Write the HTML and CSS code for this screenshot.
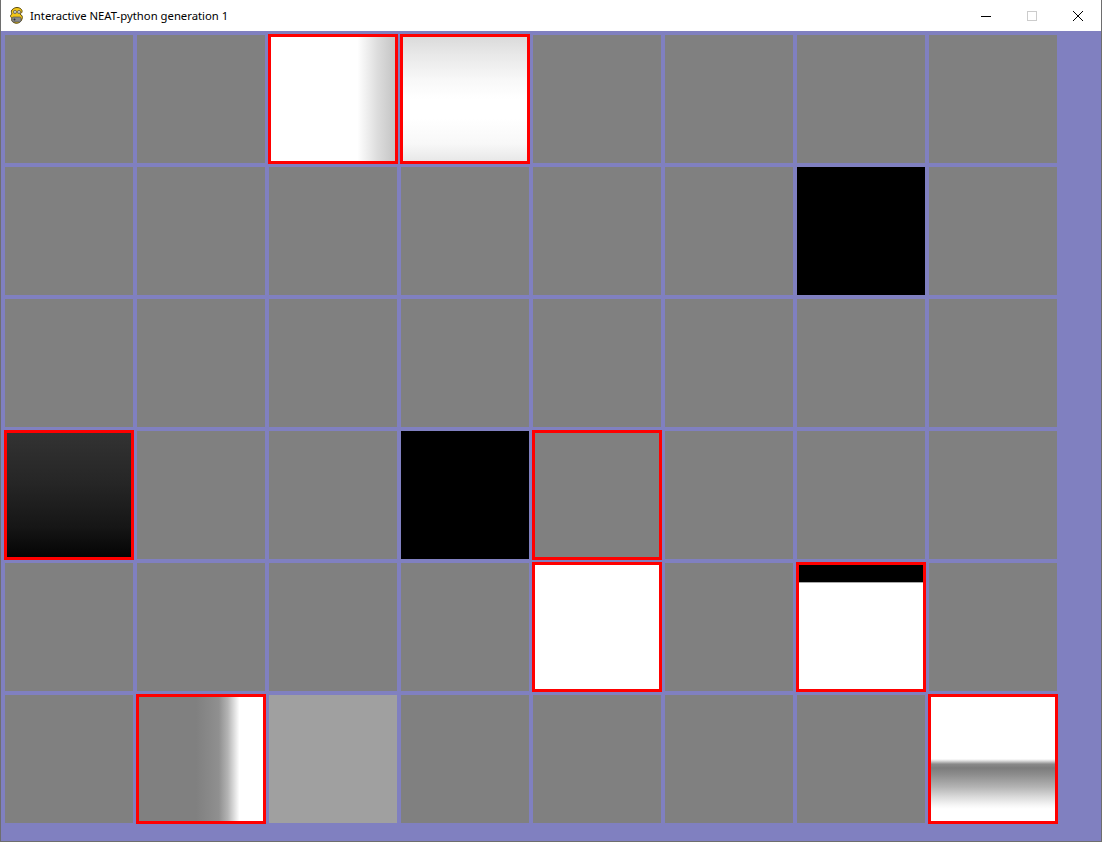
FILE: index.html
```html
<!DOCTYPE html>
<html>
<head>
<meta charset="utf-8">
<title>Interactive NEAT-python generation 1</title>
<link rel="stylesheet" href="styles.css">
</head>
<body>
<div class="window">
  <div class="titlebar">
    <svg class="app-icon" width="16" height="18" viewBox="0 0 16 18">
      <path d="M4 2 C6 0 10 0 12 2 C14 4 13 6 11 7 C13 8 14 10 13 12 C12 15 9 17 6 16 C3 15 2 13 3 11 C1 10 1 8 3 7 C2 5 2 3 4 2 Z" fill="#f2c618" stroke="#5a4a10" stroke-width="1"/>
      <circle cx="6" cy="5" r="1.6" fill="#fff" stroke="#333" stroke-width="0.6"/>
      <circle cx="10" cy="5" r="1.6" fill="#fff" stroke="#333" stroke-width="0.6"/>
      <circle cx="6" cy="5" r="0.6" fill="#000"/>
      <circle cx="10" cy="5" r="0.6" fill="#000"/>
      <rect x="3" y="10" width="9" height="5" rx="1.5" fill="#8a8a8a" stroke="#444" stroke-width="0.6"/>
      <circle cx="5.5" cy="12.5" r="1" fill="#333"/>
    </svg>
    <span class="title">Interactive NEAT-python generation 1</span>
    <div class="controls">
      <div class="ctl">
        <svg width="10" height="10" viewBox="0 0 10 10"><path d="M0 5.5 H10" stroke="#000" stroke-width="1"/></svg>
      </div>
      <div class="ctl">
        <svg width="10" height="10" viewBox="0 0 10 10"><rect x="0.5" y="0.5" width="9" height="9" fill="none" stroke="#cccccc" stroke-width="1"/></svg>
      </div>
      <div class="ctl">
        <svg width="10" height="10" viewBox="0 0 10 10"><path d="M0 0 L10 10 M10 0 L0 10" stroke="#000" stroke-width="1"/></svg>
      </div>
    </div>
  </div>
  <div class="canvas">
    <div class="grid">
      <div class="tile"></div><div class="tile"></div><div class="tile sel t-white-right"></div><div class="tile sel t-white-vert"></div><div class="tile"></div><div class="tile"></div><div class="tile"></div><div class="tile"></div>
      <div class="tile"></div><div class="tile"></div><div class="tile"></div><div class="tile"></div><div class="tile"></div><div class="tile"></div><div class="tile t-black"></div><div class="tile"></div>
      <div class="tile"></div><div class="tile"></div><div class="tile"></div><div class="tile"></div><div class="tile"></div><div class="tile"></div><div class="tile"></div><div class="tile"></div>
      <div class="tile sel t-dark"></div><div class="tile"></div><div class="tile"></div><div class="tile t-black"></div><div class="tile sel"></div><div class="tile"></div><div class="tile"></div><div class="tile"></div>
      <div class="tile"></div><div class="tile"></div><div class="tile"></div><div class="tile"></div><div class="tile sel t-white"></div><div class="tile"></div><div class="tile sel t-blackbar"></div><div class="tile"></div>
      <div class="tile"></div><div class="tile sel t-gray-right"></div><div class="tile t-light"></div><div class="tile"></div><div class="tile"></div><div class="tile"></div><div class="tile"></div><div class="tile sel t-band"></div>
    </div>
  </div>
</div>
</body>
</html>
```

FILE: styles.css
```css
html, body {
  margin: 0;
  padding: 0;
  background: #ffffff;
}

.window {
  width: 1102px;
  height: 842px;
  box-sizing: border-box;
  border-left: 1px solid #6e6e6e;
  border-right: 1px solid #6e6e6e;
  border-bottom: 1px solid #6e6e6e;
  display: flex;
  flex-direction: column;
  overflow: hidden;
}

.titlebar {
  height: 31px;
  flex: 0 0 31px;
  background: #ffffff;
  display: flex;
  align-items: center;
  font-family: "Noto Sans", "Open Sans", sans-serif;
  font-size: 11.3px;
  color: #000000;
}

.app-icon {
  margin-left: 8px;
  flex: 0 0 auto;
}

.title {
  margin-left: 5px;
  line-height: 16px;
  flex: 1 1 auto;
  white-space: nowrap;
}

.controls {
  display: flex;
  height: 100%;
}

.ctl {
  width: 46px;
  height: 31px;
  display: flex;
  align-items: center;
  justify-content: center;
}

.canvas {
  flex: 1 1 auto;
  background: #8080c0;
  padding: 4px;
}

.grid {
  display: grid;
  grid-template-columns: repeat(8, 128px);
  grid-auto-rows: 128px;
  gap: 4px;
}

.tile {
  background: #808080;
}

.sel {
  box-shadow: 0 0 0 1px #ff0000, inset 0 0 0 2px #ff0000;
}

.t-black {
  background: #000000;
}

.t-white {
  background: #ffffff;
}

.t-light {
  background: #a0a0a0;
}

.t-dark {
  background: linear-gradient(to bottom, #333333 0%, #262626 40%, #161616 75%, #030303 100%);
}

.t-white-right {
  background: linear-gradient(to right, #ffffff 0%, #ffffff 69%, #f2f2f2 75%, #dcdcdc 85%, #c2c2c2 100%);
}

.t-white-vert {
  background: linear-gradient(to bottom, #d9d9d9 0%, #e8e8e8 15%, #f8f8f8 35%, #ffffff 50%, #ffffff 65%, #f8f8f8 85%, #e6e6e6 100%);
}

.t-blackbar {
  background: linear-gradient(to bottom, #000000 0px, #000000 19px, #a8a8a8 19px, #a8a8a8 20px, #ffffff 20px, #ffffff 100%);
}

.t-gray-right {
  background: linear-gradient(to right, #808080 0%, #808080 46%, #8a8a8a 58%, #909090 64%, #b4b4b4 71%, #e6e6e6 77%, #ffffff 80%, #ffffff 100%);
}

.t-band {
  background: linear-gradient(to bottom, #ffffff 0%, #ffffff 50%, #dadada 51.5%, #8a8a8a 54%, #7c7c7c 57%, #8c8c8c 62%, #b4b4b4 72%, #dcdcdc 80%, #f6f6f6 86%, #ffffff 89%, #ffffff 100%);
}
```
